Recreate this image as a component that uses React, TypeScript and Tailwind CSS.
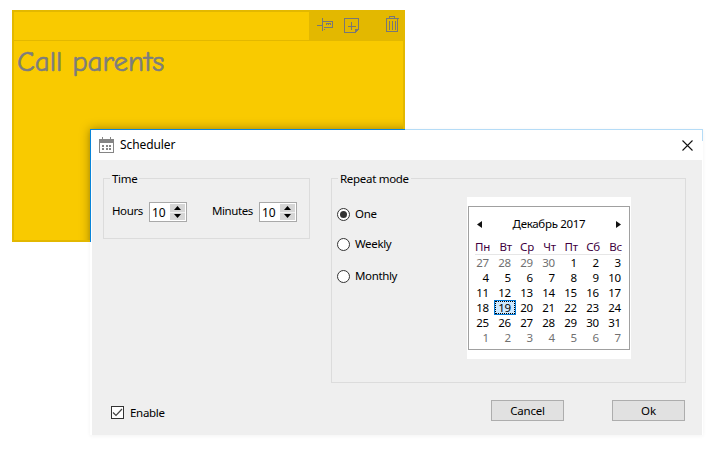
import React from "react";

const days: [string, boolean][] = [
  ["27", true], ["28", true], ["29", true], ["30", true], ["1", false], ["2", false], ["3", false],
  ["4", false], ["5", false], ["6", false], ["7", false], ["8", false], ["9", false], ["10", false],
  ["11", false], ["12", false], ["13", false], ["14", false], ["15", false], ["16", false], ["17", false],
  ["18", false], ["19", false], ["20", false], ["21", false], ["22", false], ["23", false], ["24", false],
  ["25", false], ["26", false], ["27", false], ["28", false], ["29", false], ["30", false], ["31", false],
  ["1", true], ["2", true], ["3", true], ["4", true], ["5", true], ["6", true], ["7", true],
];
const heads = ["Пн", "Вт", "Ср", "Чт", "Пт", "Сб", "Вс"];

function Spinner() {
  return (
    <div className="flex h-[20px] w-[38px] border border-[#a9a9a9] bg-white p-px">
      <span className="flex-1 pl-[1px] text-[12px] leading-[17px] text-black">10</span>
      <div className="flex w-[15px] flex-col gap-px bg-[#f0f0f0]">
        <div className="flex flex-1 items-center justify-center bg-[#d6d6d6]">
          <svg width="7" height="4" viewBox="0 0 7 4"><path d="M3.5 0 7 4H0z" fill="#000" /></svg>
        </div>
        <div className="flex flex-1 items-center justify-center bg-[#d6d6d6]">
          <svg width="7" height="4" viewBox="0 0 7 4"><path d="M0 0h7L3.5 4z" fill="#000" /></svg>
        </div>
      </div>
    </div>
  );
}

function Radio({ label, checked }: { label: string; checked?: boolean }) {
  return (
    <div className="flex h-[14px] items-center gap-[5px]">
      <span className="flex h-[13px] w-[13px] items-center justify-center rounded-full border border-[#333] bg-white">
        {checked && <span className="h-[7px] w-[7px] rounded-full bg-[#333]" />}
      </span>
      <span className="text-[11.5px] leading-[14px] tracking-[-0.35px] text-black">{label}</span>
    </div>
  );
}

function Group({ title, className, children }: { title: string; className: string; children: React.ReactNode }) {
  return (
    <div className={`relative border border-[#dcdcdc] ${className}`}>
      <span className="absolute left-[6px] top-[-8px] bg-[#efefef] px-[2px] text-[11.5px] leading-[15px] tracking-[-0.3px] text-black">{title}</span>
      {children}
    </div>
  );
}

export default function App() {
  return (
    <div className="relative h-[461px] w-[726px] overflow-hidden bg-white" style={{ fontFamily: '"Noto Sans", sans-serif' }}>
      {/* Sticky note */}
      <div className="absolute left-[12px] top-[10px] flex h-[232px] w-[393px] flex-col overflow-hidden border-2 border-[#e3b800] bg-[#f9ca00]">
        <div className="flex h-[29px] shrink-0 justify-end border-b border-[#e3b800]">
          <div className="relative flex w-[94px] items-center bg-[#e3b800]">
            <svg className="absolute left-[8px] top-[6px]" width="16" height="14" viewBox="0 0 16 14" fill="none" stroke="#777" strokeWidth="1" shapeRendering="crispEdges">
              <path d="M0 7.5h5M5.5 0v13M5 3.5h2v-1M7 3.5h8.5v6H7M7.5 10.5v1M9 5.5h5M9 6.5h1M11 6.5h1M13 6.5h1" />
            </svg>
            <svg className="absolute left-[35px] top-[6px]" width="15" height="15" viewBox="0 0 15 15" fill="none" stroke="#777" strokeWidth="1" shapeRendering="crispEdges">
              <path d="M.5.5h13.5v11L11 14.5H.5zM7.5 4v8M3.5 8h8M11 14v-3h3" />
            </svg>
            <svg className="absolute left-[76px] top-[4px]" width="14" height="16" viewBox="0 0 14 16" fill="none" stroke="#777" strokeWidth="1" shapeRendering="crispEdges">
              <path d="M.5 2.5h13M4.5 2.5v-2h5v2M1.5 2.5v13h11v-13M4 5v8.5M7 5v8.5M10 5v8.5" />
            </svg>
          </div>
        </div>
        <div className="pl-[3px] pt-[2px] text-[29px] leading-[38px] text-[#7d7d7d] [-webkit-text-stroke:0.6px_#7d7d7d]" style={{ fontFamily: '"Comic Sans MS", "Comic Neue", cursive' }}>
          Call parents
        </div>
        {/* shadow the dialog casts on the note */}
        <div className="absolute left-[76px] top-[117px] h-[306px] w-[613px] shadow-[0_0_10px_rgba(0,0,0,0.35)]" />
      </div>

      {/* Scheduler dialog */}
      <div className="absolute left-[90px] top-[129px] flex h-[306px] w-[613px] flex-col border-t border-t-[#b5dcf7] bg-white pl-[2px] pr-px shadow-[0_1px_4px_rgba(0,0,0,0.05)]">
        <span className="absolute left-0 top-[-1px] h-px w-[315px] bg-[#0a84d8]" />
        <span className="absolute left-0 top-[-1px] h-[113px] w-px bg-[#0a84d8]" />
        <span className="absolute right-0 top-0 h-[11px] w-px bg-[#b5dcf7]" />
        <div className="flex h-[30px] shrink-0 items-center bg-white pl-[7px] pr-[9px]">
          <svg width="16" height="16" viewBox="0 0 16 16" fill="none" shapeRendering="crispEdges">
            <path d="M.5 2.5h14v13H.5z" stroke="#858585" />
            <path d="M1 3h13v3H1z" fill="#858585" />
            <path d="M3.5 0v3M11.5 0v3" stroke="#858585" />
            <path d="M3 8h2v2H3zM6.5 8h2v2h-2zM10 8h2v2h-2zM3 11h2v2H3zM6.5 11h2v2h-2zM10 11h2v2h-2z" fill="#858585" />
          </svg>
          <span className="ml-[5px] flex-1 text-[12px] tracking-[-0.1px] text-black">Scheduler</span>
          <svg width="11" height="11" viewBox="0 0 11 11" stroke="#111" strokeWidth="1.1"><path d="M.5.5l10 10M10.5.5l-10 10" /></svg>
        </div>
        <div className="flex flex-1 flex-col bg-[#efefef] pl-[11px] pr-[16px] pt-[18px]">
          <div className="flex h-[205px] items-start gap-[21px]">
            <Group title="Time" className="h-[61px] w-[207px] shrink-0">
              <div className="flex h-full items-center pl-[8px] pt-[7px]">
                <span className="mb-[2px] w-[37px] text-[11.5px] tracking-[-0.4px] text-black">Hours</span>
                <Spinner />
                <span className="mb-[2px] ml-[25px] w-[47px] text-[11.5px] tracking-[-0.4px] text-black">Minutes</span>
                <Spinner />
              </div>
            </Group>
            <Group title="Repeat mode" className="h-[205px] w-[355px] shrink-0">
              <div className="flex items-start pl-[5px] pt-[18px]">
                <div className="flex w-[130px] flex-col pt-[10px]">
                  <Radio label="One" checked />
                  <div className="mt-[16px]"><Radio label="Weekly" /></div>
                  <div className="mt-[18px]"><Radio label="Monthly" /></div>
                </div>
                <div className="bg-white pb-[9px] pl-px pr-[1px] pt-[9px]">
                  <div className="h-[144px] w-[162px] border border-[#a0a0a0] bg-white text-[11.5px] text-black">
                    <div className="flex h-[32px] items-center justify-between pl-[8px] pr-[8px] pt-[2px]">
                      <svg width="5" height="7" viewBox="0 0 5 7"><path d="M5 0v7L0 3.5z" fill="#111" /></svg>
                      <span className="leading-[14px] tracking-[-0.3px]">Декабрь 2017</span>
                      <svg width="5" height="7" viewBox="0 0 5 7"><path d="M0 0v7l5-3.5z" fill="#111" /></svg>
                    </div>
                    <div className="grid grid-cols-[repeat(7,22px)]">
                      {heads.map((h) => (
                        <div key={h} className="h-[15px] pr-px text-right leading-[15px] tracking-[-0.2px] text-[#400040]">{h}</div>
                      ))}
                      <div className="col-span-7 ml-[6px] h-px w-[146px] bg-[#e6e6e6]" />
                      {days.map(([d, muted], i) => (
                        <div key={i} className={`relative h-[15px] pr-[2px] text-right leading-[15px] tracking-[-0.2px] ${muted ? "text-[#707070]" : "text-black"}`}>
                          {i === 22 && <span className="absolute left-[3px] top-0 h-[15px] w-[22px] border border-[#0078d7] bg-[#cce8ff] outline-1 outline-offset-[-2px] outline-dotted outline-black" />}
                          <span className="relative">{d}</span>
                        </div>
                      ))}
                    </div>
                  </div>
                </div>
              </div>
            </Group>
          </div>
          <div className="mt-[17px] flex items-start">
            <span className="ml-[8px] mt-[6px] flex h-[13px] w-[13px] items-center justify-center border border-[#333] bg-white">
              <svg width="11" height="9" viewBox="0 0 11 9" fill="none" stroke="#444" strokeWidth="1.2"><path d="M1 4.5l3 3L10 1" /></svg>
            </span>
            <span className="ml-[6px] mt-[4px] flex-1 text-[11.5px] tracking-[-0.3px] text-black">Enable</span>
            <button className="h-[21px] w-[73px] border border-[#adadad] bg-[#e1e1e1] text-[11.5px] leading-[18px] tracking-[-0.2px] text-black">Cancel</button>
            <button className="mr-px ml-[48px] h-[21px] w-[73px] border border-[#adadad] bg-[#e1e1e1] text-[11.5px] leading-[18px] text-black">Ok</button>
          </div>
        </div>
      </div>
    </div>
  );
}
